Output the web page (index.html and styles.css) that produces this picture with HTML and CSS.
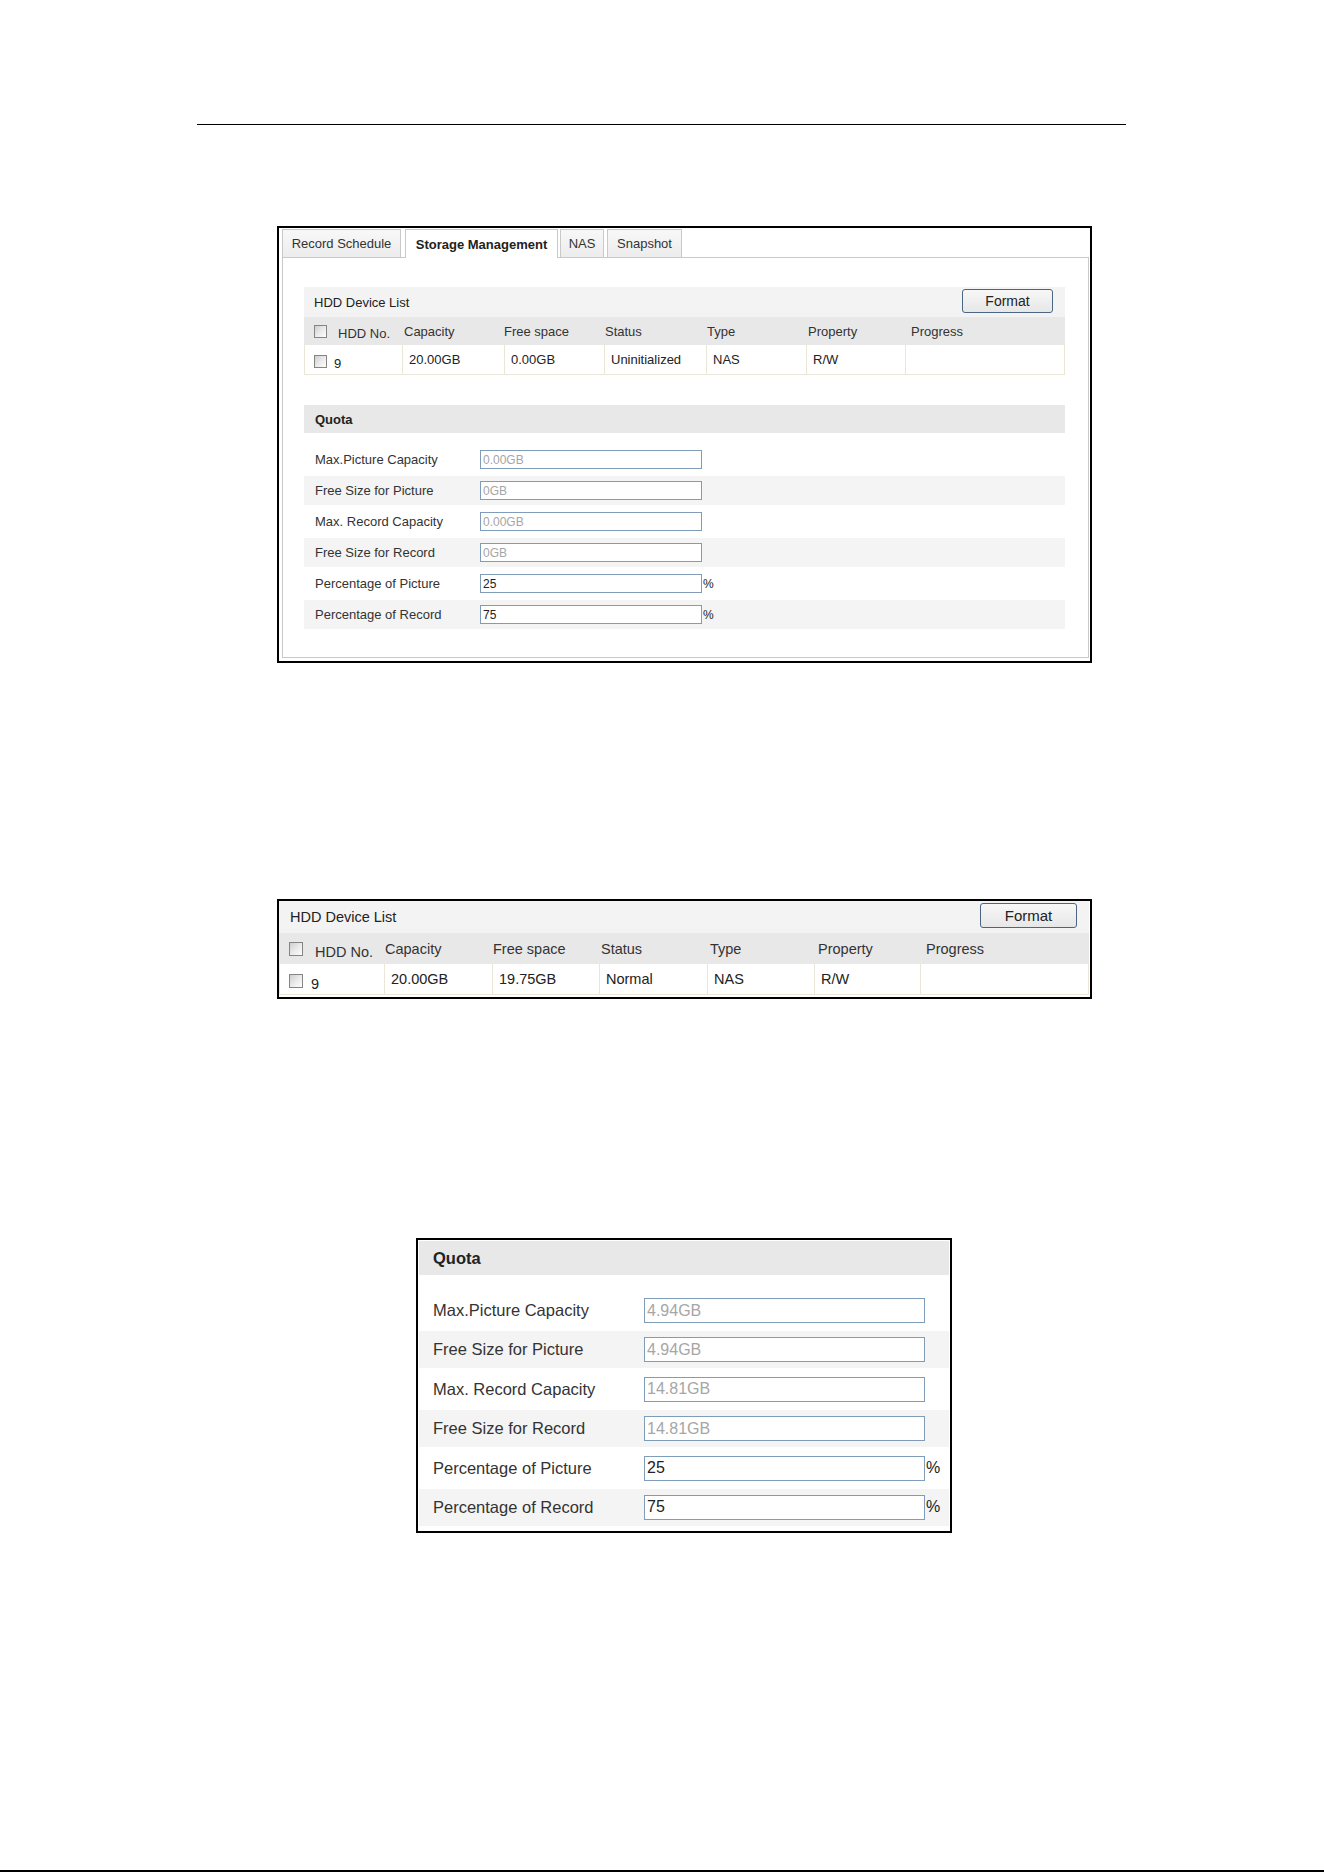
FILE: index.html
```html
<!DOCTYPE html>
<html lang="en">
<head>
<meta charset="utf-8">
<title>Storage Management</title>
<link rel="stylesheet" href="styles.css">
</head>
<body>
<div class="page">
  <div class="rule"></div>

  <!-- Figure: storage management tab -->
  <div class="fig fig-tabs">
    <div class="tabs">
      <div class="tab tab-rec">Record Schedule</div>
      <div class="tab tab-sm active">Storage Management</div>
      <div class="tab tab-nas">NAS</div>
      <div class="tab tab-snap">Snapshot</div>
    </div>
    <div class="panel">
      <div class="dl dl-s">
        <div class="dl-bar"><span>HDD Device List</span><button class="btn">Format</button></div>
        <div class="dl-head">
          <div class="c0"><span class="cb"></span><span class="low">HDD No.</span></div>
          <div>Capacity</div><div>Free space</div><div>Status</div><div>Type</div><div>Property</div><div>Progress</div>
        </div>
        <div class="dl-row">
          <div class="c0"><span class="cb"></span><span class="low2">9</span></div>
          <div>20.00GB</div><div>0.00GB</div><div>Uninitialized</div><div>NAS</div><div>R/W</div><div></div>
        </div>
      </div>

      <div class="quota q-s q-gap">
        <div class="q-bar">Quota</div>
        <div class="q-list">
          <div class="q-row"><span class="q-label">Max.Picture Capacity</span><input class="q-input off" value="0.00GB" readonly></div>
          <div class="q-row"><span class="q-label">Free Size for Picture</span><input class="q-input off" value="0GB" readonly></div>
          <div class="q-row"><span class="q-label">Max. Record Capacity</span><input class="q-input off" value="0.00GB" readonly></div>
          <div class="q-row"><span class="q-label">Free Size for Record</span><input class="q-input off" value="0GB" readonly></div>
          <div class="q-row"><span class="q-label">Percentage of Picture</span><input class="q-input" value="25"><span class="pct">%</span></div>
          <div class="q-row"><span class="q-label">Percentage of Record</span><input class="q-input" value="75"><span class="pct">%</span></div>
        </div>
      </div>
    </div>
  </div>

  <!-- Figure: HDD device list -->
  <div class="fig fig-list">
    <div class="dl dl-m">
      <div class="dl-bar"><span>HDD Device List</span><button class="btn">Format</button></div>
      <div class="dl-head">
        <div class="c0"><span class="cb"></span><span class="low">HDD No.</span></div>
        <div>Capacity</div><div>Free space</div><div>Status</div><div>Type</div><div>Property</div><div>Progress</div>
      </div>
      <div class="dl-row">
        <div class="c0"><span class="cb"></span><span class="low2">9</span></div>
        <div>20.00GB</div><div>19.75GB</div><div>Normal</div><div>NAS</div><div>R/W</div><div></div>
      </div>
    </div>
  </div>

  <!-- Figure: quota -->
  <div class="fig fig-quota">
    <div class="quota q-l">
      <div class="q-bar">Quota</div>
      <div class="q-list">
        <div class="q-row"><span class="q-label">Max.Picture Capacity</span><input class="q-input off" value="4.94GB" readonly></div>
        <div class="q-row"><span class="q-label">Free Size for Picture</span><input class="q-input off" value="4.94GB" readonly></div>
        <div class="q-row"><span class="q-label">Max. Record Capacity</span><input class="q-input off" value="14.81GB" readonly></div>
        <div class="q-row"><span class="q-label">Free Size for Record</span><input class="q-input off" value="14.81GB" readonly></div>
        <div class="q-row"><span class="q-label">Percentage of Picture</span><input class="q-input" value="25"><span class="pct">%</span></div>
        <div class="q-row"><span class="q-label">Percentage of Record</span><input class="q-input" value="75"><span class="pct">%</span></div>
      </div>
    </div>
  </div>
</div>
</body>
</html>
```
FILE: styles.css
```css
* { box-sizing: border-box; }

html, body {
  margin: 0;
  padding: 0;
  background: #fff;
}

body {
  font-family: "Liberation Sans", Arial, sans-serif;
  color: #222;
}

.page {
  width: 1324px;
  height: 1872px;
  display: flex;
  flex-direction: column;
  align-items: flex-start;
  border-bottom: 2px solid #000;
}

.rule {
  margin: 124px 0 0 197px;
  width: 929px;
  border-top: 1px solid #000;
}

/* framed figures */
.fig { border: 2px solid #000; background: #fff; }

.fig-tabs {
  margin: 101px 0 0 277px;
  width: 815px;
  height: 437px;
  padding: 1px 1px 0 3px;
}

.fig-list {
  margin: 236px 0 0 277px;
  width: 815px;
  height: 100px;
  padding: 0 1px 0 0;
}

.fig-quota {
  margin: 239px 0 0 416px;
  width: 536px;
  height: 295px;
  padding: 1px;
}

/* tab strip */
.tabs {
  display: flex;
  align-items: flex-end;
  height: 28px;
}

.tab {
  height: 28px;
  border: 1px solid #c9c9c9;
  border-bottom: none;
  background: linear-gradient(#f8f8f8, #ececec);
  font-size: 13px;
  color: #333;
  display: flex;
  align-items: center;
  justify-content: center;
}

.tab-rec { width: 119px; }
.tab-sm { width: 153px; margin-left: 4px; }
.tab-nas { width: 44px; margin-left: 2px; }
.tab-snap { width: 75px; margin-left: 3px; }

.tab.active {
  background: #fff;
  font-weight: bold;
  color: #222;
  height: 29px;
  margin-bottom: -1px;
  position: relative;
  z-index: 1;
}

.panel {
  width: 807px;
  height: 401px;
  border: 1px solid #c9c9c9;
  padding: 29px 23px 0 21px;
}

/* checkbox */
.cb {
  display: inline-block;
  flex: none;
  border: 1px solid #858585;
  background: linear-gradient(135deg, #cfcfcf 0%, #ececec 55%, #fdfdfd 100%);
}

/* format button */
.btn {
  font-family: inherit;
  color: #222;
  border: 1px solid #4a6684;
  border-radius: 3px;
  background: linear-gradient(#f7f7f7, #e7e7e7);
  padding: 0;
  align-self: flex-start;
  margin-top: 2px;
}

/* HDD device list */
.dl-bar {
  display: flex;
  justify-content: space-between;
  align-items: center;
  background: #f3f3f3;
  color: #222;
}

.dl-bar > span { align-self: center; }

.dl-head {
  display: grid;
  align-items: center;
  background: #e8e8e8;
  color: #333;
}

.dl-row {
  display: grid;
  background: #fff;
  border: 1px solid #ebe7d8;
  border-top: none;
}

.dl-row > div {
  display: flex;
  align-items: center;
  border-left: 1px solid #ebe7d8;
}

.dl-row > div.c0 { border-left: none; }

.c0 { display: flex; align-items: center; }

/* small list (inside tab panel) */
.dl-s { width: 761px; font-size: 13px; }
.dl-s .dl-bar { height: 30px; padding: 0 12px 0 10px; }
.dl-s .btn { width: 91px; height: 24px; font-size: 14px; }
.dl-s .dl-head { height: 28px; grid-template-columns: 100px 100px 101px 102px 101px 103px 1fr; }
.dl-s .dl-row { height: 30px; grid-template-columns: 97px 102px 100px 102px 100px 99px 1fr; }
.dl-s .dl-row > div { padding-left: 6px; }
.dl-s .c0 { padding-left: 10px; }
.dl-s .dl-row > div.c0 { padding-left: 9px; }
.dl-s .cb { width: 13px; height: 13px; }
.dl-s .dl-head .cb { margin-right: 11px; }
.dl-s .dl-row .cb { margin-right: 7px; margin-top: 3px; }
.dl-s .low { margin-top: 5px; }
.dl-s .low2 { margin-top: 8px; }

/* medium list */
.dl-m { width: 810px; font-size: 14.5px; }
.dl-m .dl-bar { height: 32px; padding: 0 12px 0 11px; }
.dl-m .btn { width: 97px; height: 25px; font-size: 15px; }
.dl-m .dl-head { height: 31px; grid-template-columns: 106px 108px 108px 109px 108px 108px 1fr; }
.dl-m .dl-row { height: 31px; grid-template-columns: 104px 108px 107px 108px 107px 106px 1fr; }
.dl-m .dl-row > div { padding-left: 6px; }
.dl-m .c0 { padding-left: 10px; }
.dl-m .dl-row > div.c0 { padding-left: 9px; }
.dl-m .cb { width: 14px; height: 14px; }
.dl-m .dl-head .cb { margin-right: 12px; }
.dl-m .dl-row .cb { margin-right: 8px; margin-top: 4px; }
.dl-m .low { margin-top: 7px; }
.dl-m .low2 { margin-top: 10px; }

/* quota */
.q-bar {
  display: flex;
  align-items: center;
  background: #e8e8e8;
  font-weight: bold;
  color: #222;
}

.q-list { display: flex; flex-direction: column; }

.q-row {
  display: flex;
  align-items: center;
  color: #333;
}

.q-row:nth-child(even) { background: #f4f4f4; }

.q-label { flex: none; }

.q-input {
  font-family: inherit;
  border: 1px solid #7f9db9;
  background: #fff;
  color: #222;
  padding: 0 2px;
  margin: 0;
  outline: none;
}

.q-input.off { color: #a6a6a6; }

.pct { color: #222; }

.q-gap { margin-top: 30px; }

/* small quota (inside tab panel) */
.q-s { width: 761px; font-size: 13px; }
.q-s .q-bar { height: 28px; padding-left: 11px; font-size: 13px; }
.q-s .q-list { padding-top: 12px; gap: 2px; }
.q-s .q-row { height: 29px; padding-left: 11px; }
.q-s .q-label { width: 165px; }
.q-s .q-input { width: 222px; height: 19px; font-size: 12px; }
.q-s .pct { font-size: 12px; margin-left: 1px; }

/* large quota */
.q-l { width: 530px; font-size: 16.5px; }
.q-l .q-bar { height: 34px; padding-left: 14px; font-size: 16.5px; }
.q-l .q-list { padding-top: 17px; gap: 2.4px; }
.q-l .q-row { height: 37px; padding-left: 14px; }
.q-l .q-label { width: 211px; }
.q-l .q-input { width: 281px; height: 25px; font-size: 16px; }
.q-l .pct { font-size: 16px; margin-left: 1px; }
```
